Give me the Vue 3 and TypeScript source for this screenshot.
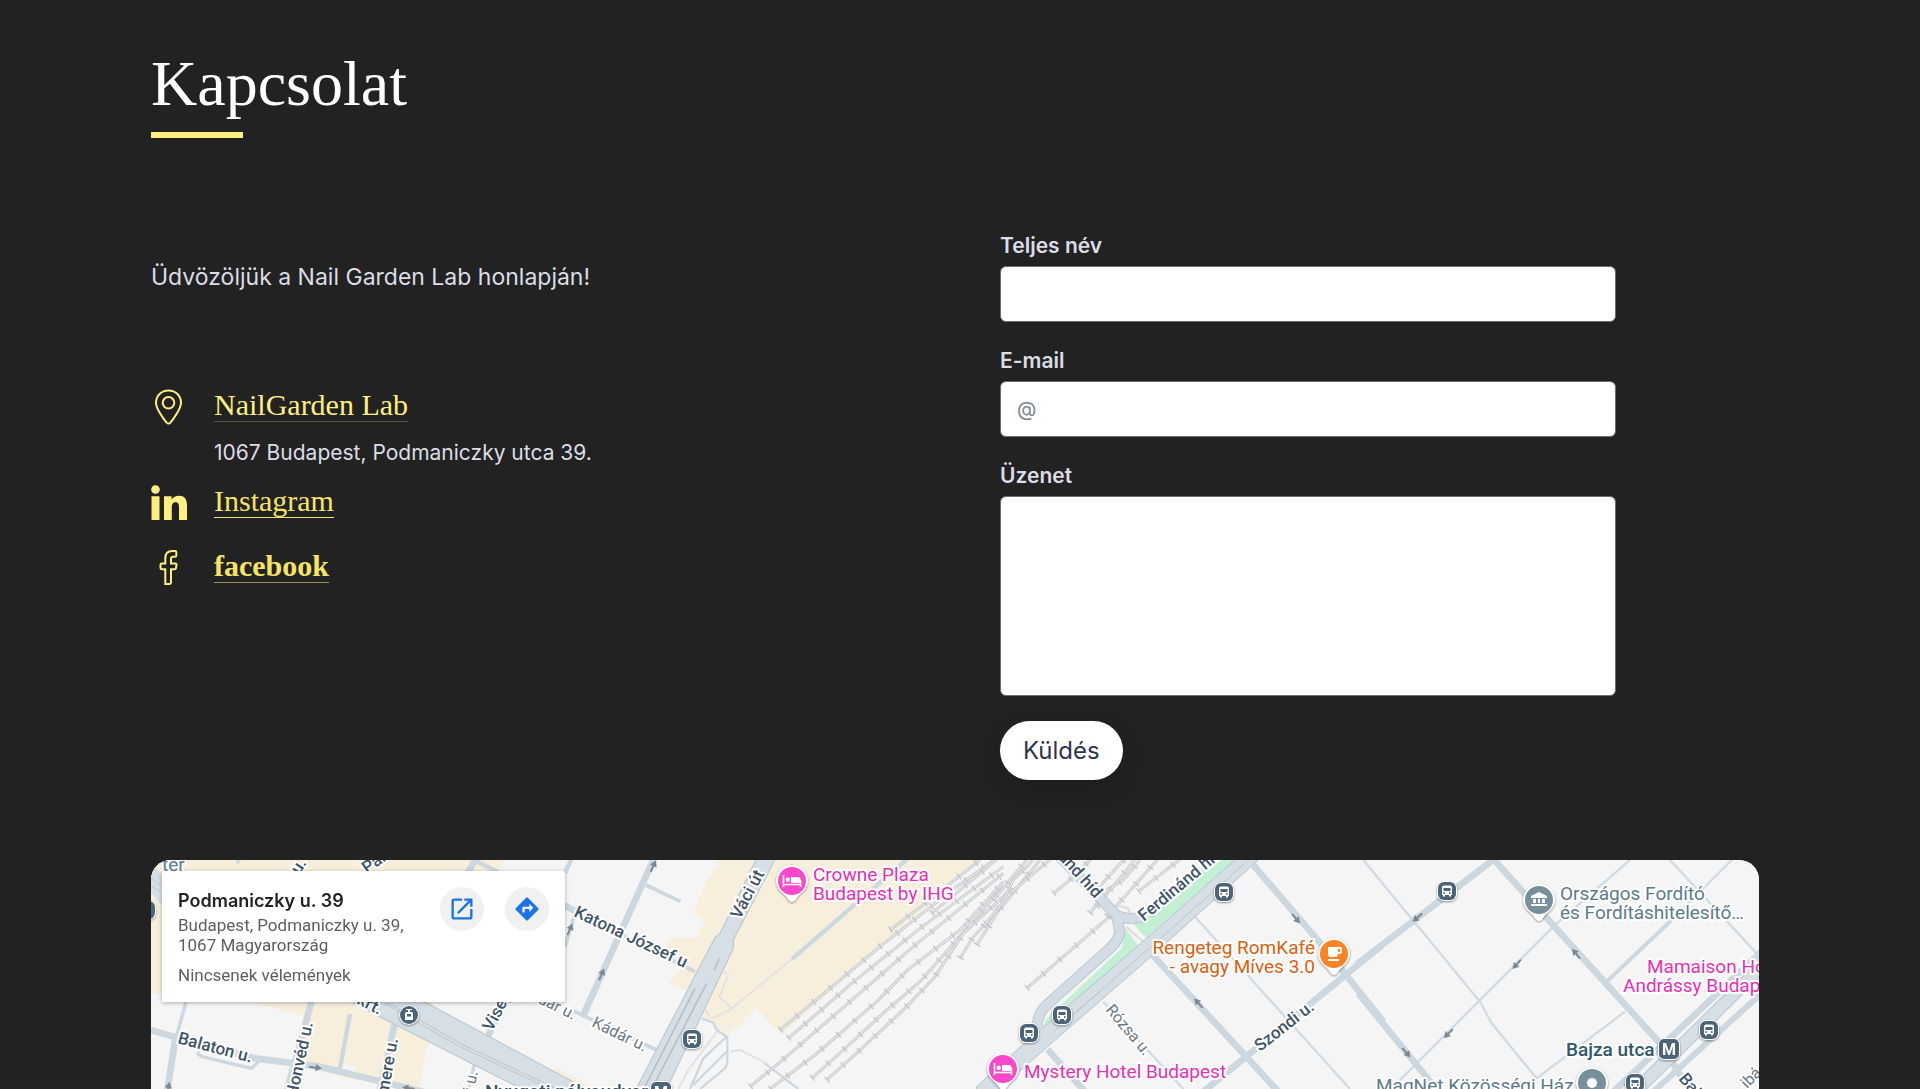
<script setup lang="ts">
interface Arrow { x: number; y: number; r: number }
interface Label { t: string; x: number; y: number; r?: number; c: string; end?: boolean }
interface Spot { x: number; y: number }

// Geometry is stored at three units per pixel; each sheet has its own origin.
const arrows: Arrow[] = [
  { x: 1507, y: 18, r: -65 }, { x: 1257, y: 208, r: -65 }, { x: 1352, y: 343, r: -65 },
  { x: 494, y: 623, r: 8 }, { x: 52, y: 684, r: -80 }, { x: 772, y: 684, r: 190 },
  { x: 3435, y: 176, r: 50 }, { x: 3142, y: 429, r: 230 }, { x: 3799, y: 173, r: 140 },
  { x: 4097, y: 313, r: 132 }, { x: 4275, y: 281, r: 230 }, { x: 3892, y: 521, r: 135 },
  { x: 3766, y: 578, r: 50 },
]

const rails: string[] = [
  'M660 540L960 290L1190 110L1330 10',
  'M685 565L885 392L1080 235L1330 50',
  'M570 710L670 628L870 455L1060 290L1330 70',
  'M630 717L765 615L950 455L1045 358L1200 240L1330 95',
  'M755 685L850 600L975 485L1080 395L1190 270L1330 110',
  'M800 690L895 605L1035 475L1125 380L1210 250L1340 130',
  'M1200 325L1240 260L1330 165L1440 30',
  'M1250 285L1310 190L1360 90L1420 30',
  'M990 240L1095 160L1260 30',
  'M1115 190L1320 20',
  'M1300 150L1400 30', 'M1270 230L1350 130L1480 20',
  'M1480 130L1530 90L1600 20', 'M1735 125L1870 20',
  'M1590 190L1640 120L1690 90L1740 30', 'M1600 130L1700 20', 'M1400 415L1660 190',
  'M1610 170L1700 60L1730 20', 'M1640 200L1730 100L1800 20',
]

const labels: Label[] = [
  { t: 'Katona József u', x: 422, y: 56, r: 25, c: 'street' },
  { t: 'Váci út', x: 589, y: 60, r: -62, c: 'street' },
  { t: 'Kádár u.', x: 440, y: 166, r: 26, c: 'lane' },
  { t: 'Kádár u.', x: 422, y: 160, r: 26, c: 'lane', end: true },
  { t: 'Visegrádi u.', x: 341, y: 172, r: -62, c: 'street' },
  { t: 'Honvéd u.', x: 162, y: 163, r: -78, c: 'street', end: true },
  { t: 'Szemere u.', x: 247, y: 179, r: -80, c: 'street', end: true },
  { t: 'Balaton u.', x: 26, y: 183, r: 15, c: 'street' },
  { t: 'Szent István krt.', x: 228, y: 155, r: 27, c: 'street', end: true },
  { t: 'Vadász u.', x: 156, y: 3, r: -58, c: 'street', end: true },
  { t: 'Pannónia u.', x: 216, y: 14, r: -35, c: 'street' },
  { t: 'tér', x: 11, y: 11, c: 'place' },
  { t: 'Jókai u.', x: 327, y: 212, r: -78, c: 'lane', end: true },
  { t: 'Nyugati pályaudvar', x: 334, y: 238, c: 'station' },
  { t: 'Crowne Plaza', x: 662, y: 21, c: 'hotel' },
  { t: 'Budapest by IHG', x: 662, y: 40, c: 'hotel' },
  { t: 'Ferdinánd híd', x: 944, y: 39, r: 48, c: 'street', end: true },
  { t: 'Ferdinánd híd', x: 993, y: 62, r: -40, c: 'street' },
  { t: 'Rengeteg RomKafé', x: 1164, y: 94, c: 'cafe', end: true },
  { t: '- avagy Míves 3.0', x: 1164, y: 113, c: 'cafe', end: true },
  { t: 'Rózsa u.', x: 954, y: 150, r: 50, c: 'lane' },
  { t: 'Szondi u.', x: 1109, y: 192, r: -38, c: 'street' },
  { t: 'Mystery Hotel Budapest', x: 873, y: 218, c: 'hotel' },
  { t: 'Országos Fordító', x: 1409, y: 40, c: 'place' },
  { t: 'és Fordításhitelesítő…', x: 1409, y: 59, c: 'place' },
  { t: 'Mamaison Hotel', x: 1496, y: 113, c: 'hotel' },
  { t: 'Andrássy Budapest', x: 1472, y: 132, c: 'hotel' },
  { t: 'Bajza utca', x: 1415, y: 196, c: 'station' },
  { t: 'MagNet Közösségi Ház', x: 1225, y: 232, c: 'place' },
  { t: 'Bajza u.', x: 1527, y: 219, r: 50, c: 'street' },
  { t: 'ibá', x: 1596, y: 229, r: -45, c: 'lane' },
]

const buses: Spot[] = [
  { x: -5, y: 50 }, { x: 541, y: 179 }, { x: 1073, y: 32 }, { x: 911, y: 155 }, { x: 878, y: 173 },
  { x: 1296, y: 31 }, { x: 1558, y: 170 }, { x: 1484, y: 223 },
]
const metros: Spot[] = [{ x: 510, y: 232 }, { x: 1518, y: 189 }]
</script>

<template>
  <main class="page">
    <header>
      <h1>Kapcsolat</h1>
      <div class="rule"></div>
    </header>

    <section class="contact">
      <div class="info">
        <p class="welcome">Üdvözöljük a Nail Garden Lab honlapján!</p>
        <ul>
          <li>
            <svg class="icon" viewBox="0 0 36 36" aria-hidden="true">
              <path d="M17.500 1.500C10.300 1.500 5 6.800 5 13.700c0 5.600 6.800 15.500 10.600 20a2.500 2.500 0 0 0 3.800 0C23.200 29.200 30 19.300 30 13.700 30 6.800 24.700 1.500 17.500 1.500z" />
              <circle cx="17.500" cy="13.800" r="5.800" />
            </svg>
            <div>
              <a class="faint" href="#map">NailGarden Lab</a>
              <p class="address">1067 Budapest, Podmaniczky utca 39.</p>
            </div>
          </li>
          <li>
            <svg class="icon solid" viewBox="0 0 36 36" aria-hidden="true">
              <circle cx="4.500" cy="4.500" r="4.300" />
              <path d="M.5 11.300h8V35h-8zM13 11.300h7.600v3.200c1.100-2 3.700-3.800 7.400-3.800 6.500 0 8 4.300 8 10.500V35h-8V22.600c0-2.900-.4-5.400-3.500-5.400-3.100 0-3.700 2.600-3.700 5.300V35H13z" />
            </svg>
            <a href="#instagram">Instagram</a>
          </li>
          <li>
            <svg class="icon" viewBox="0 0 36 36" aria-hidden="true">
              <path d="M14.300 34V19.300H10.700q-1.200 0-1.200-1.200v-3.400q0-1.200 1.200-1.200h3.600V8.400c0-4.700 2.700-7.300 7-7.300h2.800q1.200 0 1.200 1.200v3.300q0 1.200-1.200 1.200h-2c-1.800 0-2.100.8-2.100 2.300v4.400h4.300q1.400 0 1.200 1.300l-.5 3.300q-.2 1.200-1.400 1.200H20V32.600q0 1.400-1.300 1.400z" />
            </svg>
            <a class="strong" href="#facebook">facebook</a>
          </li>
        </ul>
      </div>

      <form @submit.prevent>
        <label for="name">Teljes név</label>
        <input id="name" type="text" />
        <label for="email">E-mail</label>
        <input id="email" type="email" placeholder="@" />
        <label for="message">Üzenet</label>
        <textarea id="message"></textarea>
        <button type="submit">Küldés</button>
      </form>
    </section>

    <section id="map" class="map">
      <svg class="sheet" viewBox="0 0 1608 229" preserveAspectRatio="xMinYMin slice" aria-label="Térkép">
        <defs>
          <g id="bus">
            <rect x="-10" y="-10" width="20" height="20" rx="7" fill="#fff" />
            <rect x="-9" y="-9" width="18" height="18" rx="6" fill="#4b6478" />
            <path d="M-5-3.500Q-5-5.500-3-5.500H3Q5-5.500 5-3.500V4H4V5.500H2V4H-2V5.500H-4V4H-5z" fill="#fff" />
            <path d="M-3.500-3H3.500V0H-3.500z" fill="#4b6478" />
            <circle cx="-2.800" cy="2" r=".9" fill="#4b6478" /><circle cx="2.800" cy="2" r=".9" fill="#4b6478" />
          </g>
          <path id="drop" d="M0 21C-2.500 21-3.600 18.500-6 15.500-9 12-16 8-16 0A16 16 0 1 1 16 0C16 8 9 12 6 15.500 3.600 18.500 2.500 21 0 21z" fill="#fff" />
          <g id="bed">
            <path d="M-8.500-6V6M-8.500 3.500H8.500V6M8.500 4V-1" fill="none" stroke="#fff" stroke-width="1.600" />
            <path d="M-1-4H6Q8.500-4 8.500-1.500V2H-1z" fill="#fff" /><circle cx="-4.300" cy="-1.200" r="2.200" fill="#fff" />
          </g>
        </defs>
        <rect width="1608" height="229" fill="#f5f5f5" />
        <g transform="scale(.333333)" fill="none" stroke-linejoin="round">
          <g transform="translate(-33 -30)">
            <path class="block" d="M33 30H1095L1060 90H66V432L33 430zM330 457H660L885 555 858 600 838 717 690 690 640 690 480 650 505 500zM830 440H885L875 478zM1230 645L1390 725H1310z" />
            <path d="M608 640L650 650 645 675 603 660z" fill="#f5f5f5" />
            <path class="main-road" d="M-10 30L90 150" stroke-width="60" />
            <path class="edge" d="M33 85L70 110M33 105L70 135" />
            <path class="road" stroke-width="20" d="M33 540L110 563 345 625 540 650 860 728" />
            <path class="road" stroke-width="10" d="M170 608L185 620 335 655 362 628M140 450L106 570M1005 635L985 720M290 40L300 25" />
            <path class="road" stroke-width="20" d="M107 560L82 720M516 450L440 725M765 520L718 725M1035 575L1110 430M1010 20L980 75" />
            <path class="road" stroke-width="13" d="M630 492L600 655M1000 30L1075 66M1275 70L1295 25" />
            <path d="M660 470L600 440H825L1340 717 1390 745H1200z" fill="#d6dee6" stroke="#b4c1cc" stroke-width="3" />
            <path class="edge" d="M730 458L820 510 960 590 1270 735M742 458L830 505 970 585 1290 735" />
          </g>
          <g transform="translate(1227 -30)">
            <path class="block" d="M460 30L510 60 475 45 440 90 420 140 400 190 435 210 410 265 335 262 315 290 350 315 385 335 325 400 385 425 340 500 430 480 430 500 495 555 548 525 550 510 590 475 665 555 1260 30z" />
            <path d="M300 480L430 480 400 400z" fill="#f5f5f5" />
            <path class="road" stroke-width="20" d="M282 25L68 500M10 165L60 190" />
            <path class="road" stroke-width="11" d="M50 185L405 365M30 478L290 600M258 105L362 155M15 60L35 30M15 290L45 190" />
            <path d="M590 25H647L520 270V295L320 717H228L465 262 480 250z" fill="#d6dee6" stroke="#b4c1cc" stroke-width="3" />
            <path d="M405 415L250 720M440 400L275 717M478 326L462 360" stroke="#adbac5" stroke-width="4" />
            <path d="M695 328L1050 20" stroke="#ccd8e1" stroke-width="13" />
            <path d="M695 328L510 480 455 505M490 365L505 375 478 440 515 475M438 480L450 505M470 545L430 600 385 660 355 717M510 605L540 600 620 640" stroke="#e2e2e2" stroke-width="6" />
            <path d="M425 505L460 518 470 540 502 562V640L495 655 420 717M500 560L430 625 390 717M500 605L400 705M615 640L715 717" stroke="#ccd8e1" stroke-width="7" />
            <g v-for="(d, i) in rails" :key="i">
              <path :d="d" stroke="#c8cbd0" stroke-width="9" />
              <path :d="d" stroke="#f3f2f0" stroke-width="3" />
              <path :d="d" stroke="#c3c6cc" stroke-width="22" stroke-dasharray="4 61" />
            </g>
          </g>
          <g transform="translate(2487 -30)">
            <path class="lane-line" d="M645 200L1110 717M370 455L610 717" />
            <path class="road" stroke-width="20" d="M820 45L1030 290L1210 515M670 725L1205 286M518 315L895 725M203 598L315 725" />
            <path d="M182 545L200 505 425 295 436 235 475 287 300 440zM460 222L498 264 765 30H690L500 200z" fill="#c3efd4" />
            <path d="M418 168L445 175 455 205M438 230L490 275" stroke="#e0e0e0" stroke-width="8" />
            <path d="M240 20L410 196 418 238Q422 265 392 293L200 465Q172 490 170 540M410 196Q440 212 500 200" stroke="#b4c1cc" stroke-width="33" />
            <path d="M-10 710L105 605 500 265 770 25H840L515 318 200 592 50 725H-10z" fill="#d6dee6" stroke="#b4c1cc" stroke-width="3" />
            <path d="M240 20L410 196 418 238Q422 265 392 293L200 465Q172 490 170 540L163 552M410 196Q440 212 500 200" stroke="#d3dce4" stroke-width="28" />
            <path class="edge" d="M220 545L545 262 800 35M290 485L360 425" />
          </g>
          <g transform="translate(3627 -30)">
            <path class="lane-line" d="M10 30L360 455 395 520 530 685 795 485M930 30L1190 310M1120 25L935 210M812 28L580 230 110 700" />
            <path class="road" stroke-width="20" d="M-10 343L405 25M398 25L900 580 970 690M-5 430L215 700M750 735L1210 300" />
            <path class="road" stroke-width="12" d="M935 210L740 395" />
            <path d="M820 730L1210 345" stroke="#b4c1cc" stroke-width="40" />
            <path d="M820 730L1210 345" stroke="#d6dee6" stroke-width="35" />
            <path class="road" stroke-width="18" d="M880 725L1210 425" />
          </g>
          <path v-for="(a, i) in arrows" :key="i" :transform="`translate(${a.x} ${a.y}) rotate(${a.r})`" d="M-19-3H0V-11L19 0 0 11V3H-19z" fill="#7c8995" />
        </g>

        <text v-for="(l, i) in labels" :key="i" :class="['label', l.c]" :text-anchor="l.end ? 'end' : 'start'" :transform="`translate(${l.x} ${l.y}) rotate(${l.r ?? 0})`">{{ l.t }}</text>

        <g class="lift">
          <use v-for="(b, i) in buses" :key="i" href="#bus" :x="b.x" :y="b.y" />
          <g transform="translate(258 155)">
            <circle r="10" fill="#fff" /><circle r="9" fill="#4b6478" />
            <path d="M-3-6H3V-5H1V-3H2.500Q4-3 4-1.500V5H-4V-1.500Q-4-3-2.500-3H-1V-5H-3zM-2-1V1.500H2V-1z" fill="#fff" fill-rule="evenodd" />
          </g>
          <g v-for="(m, i) in metros" :key="i" :transform="`translate(${m.x} ${m.y})`">
            <rect x="-11" y="-11" width="22" height="22" rx="6" fill="#fff" /><rect x="-10" y="-10" width="20" height="20" rx="5" fill="#4b6478" />
            <text class="metro" y="6" text-anchor="middle">M</text>
          </g>
          <g transform="translate(641 21)"><use href="#drop" /><circle r="14" fill="#fb48ca" /><use href="#bed" /></g>
          <g transform="translate(852 209)"><use href="#drop" /><circle r="14" fill="#fb48ca" /><use href="#bed" /></g>
          <g transform="translate(1183 94)">
            <use href="#drop" /><circle r="14" fill="#fd8424" />
            <path d="M-6-7H7Q8-7 8-5V-2Q8 0 5 0H4Q4 3 1 3H-3Q-6 3-6 0zM4-5V-2H6V-5zM-6 5H5V7H-6z" fill="#fff" fill-rule="evenodd" />
          </g>
          <g transform="translate(1388 40)">
            <use href="#drop" /><circle r="14" fill="#78909c" />
            <path d="M0-8L8-4V-2H-8V-4zM-6-1H-3V3H-6zM-1-1H1V3H-1zM3-1H6V3H3zM-8 4H8V6H-8z" fill="#fff" />
          </g>
          <g transform="translate(1441 223)"><use href="#drop" /><circle r="14" fill="#78909c" /><circle r="5" fill="#fff" /></g>
        </g>
      </svg>

      <aside class="card">
        <div class="card-text">
          <h2>Podmaniczky u. 39</h2>
          <p>Budapest, Podmaniczky u. 39,<br />1067 Magyarország</p>
          <p class="reviews">Nincsenek vélemények</p>
        </div>
        <a class="round" href="#open" aria-label="Megnyitás">
          <svg viewBox="0 0 24 24" width="28" height="28"><path fill="#1a73e8" d="M19 19H5V5h7V3H5a2 2 0 0 0-2 2v14a2 2 0 0 0 2 2h14c1.100 0 2-.9 2-2v-7h-2zM14 3v2h3.590l-9.830 9.830 1.410 1.410L19 6.410V10h2V3z" /></svg>
        </a>
        <a class="round" href="#route" aria-label="Útvonal">
          <svg viewBox="0 0 24 24" width="28" height="28"><path fill="#1a73e8" d="m21.710 11.290-9-9a1 1 0 0 0-1.410 0l-9 9a1 1 0 0 0 0 1.410l9 9c.39.39 1.020.39 1.410 0l9-9a1 1 0 0 0 0-1.410zM14 14.500V12h-4v3H8v-4c0-.55.45-1 1-1h5V7.500l3.500 3.500z" /></svg>
        </a>
      </aside>
    </section>
  </main>
</template>

<style>
body {
  margin: 0;
  background: #222;
}
</style>

<style scoped>
.page {
  box-sizing: border-box;
  padding: 46px 161px 0 151px;
  background: #222;
  color: #dcdde6;
  font-family: Inter, "Noto Sans", sans-serif;
}
h1 {
  margin: 0;
  color: #fff;
  font: 400 64px/76px "Liberation Serif", serif;
}
.rule {
  width: 92px;
  height: 6px;
  margin-top: 10px;
  background: #ffee80;
}
.contact {
  display: grid;
  grid-template-columns: 849fr 616fr 143fr;
  align-items: start;
  padding: 98px 0 80px;
}
.welcome {
  margin: 26px 0 0;
  font-size: 23px;
  line-height: 30px;
}
ul {
  display: flex;
  flex-direction: column;
  gap: 29px;
  margin: 97px 0 0;
  padding: 0;
  list-style: none;
}
li {
  display: flex;
  align-items: flex-start;
  gap: 27px;
}
.icon {
  flex: none;
  width: 36px;
  height: 36px;
  overflow: visible;
  fill: none;
  stroke: #ffee80;
  stroke-width: 2;
}
.icon.solid {
  fill: #ffee80;
  stroke: none;
}
li a {
  display: inline-block;
  border-bottom: 1px solid #f7e464;
  color: #f7e464;
  font: 400 30px/32px "Liberation Serif", serif;
  text-decoration: none;
}
li a.faint {
  border-color: #57553a;
  color: #ffee80;
}
li a.strong {
  border-color: #99904a;
  font-weight: 700;
}
.address {
  margin: 16px 0 -12px;
  font-size: 21px;
  line-height: 30px;
}
form {
  display: flex;
  flex-direction: column;
  align-items: flex-start;
}
label {
  padding-bottom: 10px;
  font-size: 21px;
  font-weight: 600;
  line-height: 20px;
}
input,
textarea {
  box-sizing: border-box;
  width: 100%;
  height: 56px;
  margin: 0 0 29px;
  padding: 0 16px;
  border: 1px solid #6b6b6b;
  border-radius: 6px;
  background: #fff;
  font: 400 20px/28px Inter, "Noto Sans", sans-serif;
}
input::placeholder {
  color: #7b8494;
}
textarea {
  height: 200px;
  margin-bottom: 25px;
  resize: none;
}
button {
  height: 59px;
  padding: 0 23px;
  border: 0;
  border-radius: 30px;
  background: #fff;
  box-shadow: 0 8px 24px rgba(0, 0, 0, 0.16);
  color: #30344e;
  font: 400 24px/30px Inter, "Noto Sans", sans-serif;
}
.map {
  position: relative;
  height: 229px;
  overflow: hidden;
  border-radius: 20px 20px 0 0;
  background: #f5f5f5;
}
.sheet {
  display: block;
  width: 100%;
  height: 100%;
}
.block { fill: #f7efdc; }
.road { stroke: #ccd7df; }
.main-road { stroke: #d6dee6; }
.lane-line { stroke: #cfdbe5; stroke-width: 7; }
.edge { stroke: #bcc6cf; stroke-width: 3; }
.label {
  paint-order: stroke;
  stroke: #fff;
  stroke-width: 4px;
  stroke-linejoin: round;
  font-family: Roboto, sans-serif;
  font-size: 19px;
}
.street { fill: #3f5469; font-size: 17px; font-weight: 500; }
.lane { fill: #6b7883; font-size: 16px; }
.place { fill: #5b7b8a; }
.station { fill: #34566b; font-weight: 500; }
.hotel { fill: #e52fb4; }
.cafe { fill: #d9600f; }
.metro { fill: #fff; font: 700 16px Roboto, sans-serif; }
.lift { filter: drop-shadow(0 1px 1px rgba(0, 0, 0, 0.4)); }
.card {
  position: absolute;
  top: 11px;
  left: 11px;
  display: flex;
  box-sizing: border-box;
  gap: 21px;
  width: 403px;
  height: 131px;
  padding: 16px;
  border-radius: 2px;
  background: #fff;
  box-shadow: 0 1px 4px rgba(0, 0, 0, 0.3);
}
.card-text { flex: 1; }
.card h2 {
  margin: 0;
  padding: 2px 0;
  color: #222;
  font-size: 18px;
  font-weight: 600;
  line-height: 24px;
  white-space: nowrap;
}
.card p {
  margin: 0;
  color: #5e5e5e;
  font-family: Roboto, sans-serif;
  font-size: 17px;
  line-height: 20px;
  white-space: nowrap;
}
.card .reviews { margin-top: 10px; }
.round {
  display: flex;
  flex: none;
  align-items: center;
  justify-content: center;
  width: 44px;
  height: 44px;
  border-radius: 50%;
  background: #f1f1f1;
}
</style>
